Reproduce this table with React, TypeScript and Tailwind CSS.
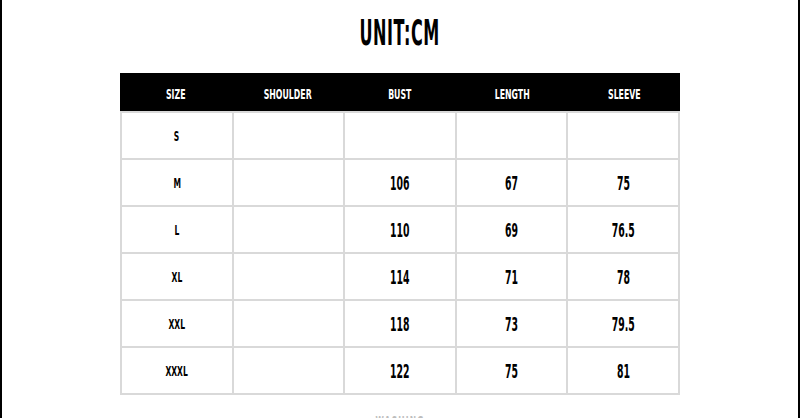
import React from "react";

const headers = ["SIZE", "SHOULDER", "BUST", "LENGTH", "SLEEVE"];
const rows = [
  ["S", "", "", "", ""],
  ["M", "", "106", "67", "75"],
  ["L", "", "110", "69", "76.5"],
  ["XL", "", "114", "71", "78"],
  ["XXL", "", "118", "73", "79.5"],
  ["XXXL", "", "122", "75", "81"],
];

const font = { fontFamily: '"DejaVu Sans Condensed", "DejaVu Sans", sans-serif' };

export default function App() {
  return (
    <div className="w-[800px] h-[418px] overflow-hidden bg-white border-l-2 border-r-2 border-black flex flex-col items-center" style={font}>
      <div className="mt-[16px] h-[42px] flex items-center justify-center">
        <span className="inline-block text-[35px] font-bold text-black leading-none scale-x-[0.51] tracking-[1px]">UNIT:CM</span>
      </div>
      <div className="mt-[22px] w-[560px]">
        <div className="h-[38px] bg-black grid grid-cols-5">
          {headers.map((h) => (
            <div key={h} className="flex items-center justify-center pt-[3px]">
              <span className="inline-block text-white text-[14px] font-bold leading-none scale-x-[0.62]">{h}</span>
            </div>
          ))}
        </div>
        <div className="grid grid-cols-5 gap-[2px] p-[2px] pt-0 bg-[#d9d9d9]">
          {rows.map((r, i) =>
            r.map((c, j) => (
              <div key={i + "-" + j} className={"bg-white h-[45px] flex items-center justify-center " + (i === 0 ? "mt-[2px]" : "")}>
                {c && (
                  <span className={"inline-block text-black font-bold leading-none " + (j === 0 ? "text-[14px] scale-x-[0.6]" : "text-[20px] scale-x-[0.52]")}>
                    {c}
                  </span>
                )}
              </div>
            ))
          )}
        </div>
      </div>
      <div className="mt-[19px] h-[20px] flex items-start justify-center">
        <span className="inline-block text-[#bdbdbd] text-[14px] font-bold leading-none scale-x-[0.6] tracking-[2px]">WASHING</span>
      </div>
    </div>
  );
}
